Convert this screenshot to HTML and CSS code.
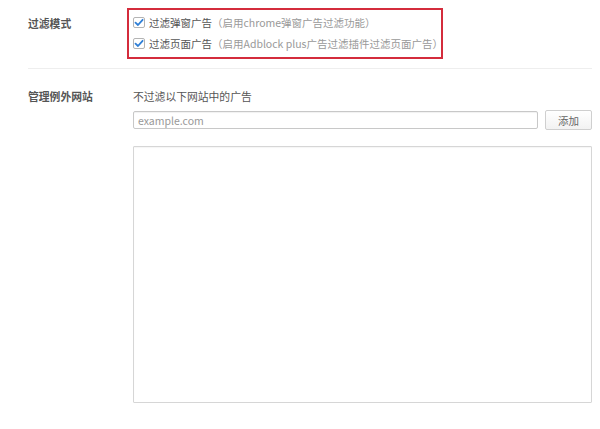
FILE: index.html
```html
<!DOCTYPE html>
<html lang="zh-CN">
<head>
<meta charset="utf-8">
<title>过滤设置</title>
<link rel="stylesheet" href="styles.css">
</head>
<body>
<div class="page">
  <section class="sec sec-mode">
    <div class="label label-mode">过滤模式</div>
    <div class="options">
      <label class="opt">
        <span class="cb"><svg width="10" height="9" viewBox="0 0 10 9"><path d="M1.5 4.6 L4 7 L8.6 1.8" fill="none" stroke="#2f7fd6" stroke-width="1.8" stroke-linecap="round" stroke-linejoin="round"/></svg></span>
        <span class="opt-main">过滤弹窗广告</span><span class="opt-note">（启用chrome弹窗广告过滤功能）</span>
      </label>
      <label class="opt">
        <span class="cb"><svg width="10" height="9" viewBox="0 0 10 9"><path d="M1.5 4.6 L4 7 L8.6 1.8" fill="none" stroke="#2f7fd6" stroke-width="1.8" stroke-linecap="round" stroke-linejoin="round"/></svg></span>
        <span class="opt-main">过滤页面广告</span><span class="opt-note">（启用Adblock plus广告过滤插件过滤页面广告）</span>
      </label>
    </div>
  </section>
  <div class="sep"></div>
  <section class="sec sec-except">
    <div class="label">管理例外网站</div>
    <div class="except-body">
      <div class="hint">不过滤以下网站中的广告</div>
      <div class="add-row">
        <input class="site-input" type="text" placeholder="example.com">
        <button class="add-btn" type="button">添加</button>
      </div>
      <textarea class="site-list"></textarea>
    </div>
  </section>
</div>
</body>
</html>
```

FILE: styles.css
```css
html, body {
  margin: 0;
  padding: 0;
  background: #fff;
}
body {
  font-family: "Noto Sans CJK SC", "Noto Sans", sans-serif;
  font-size: 10.5px;
  color: #555;
}
.page {
  padding: 0 8px 0 28px;
}
.sec {
  display: grid;
}
.sec-mode {
  grid-template-columns: 99px auto;
  padding-top: 8px;
  justify-content: start;
}
.label {
  font-size: 10.8px;
  font-weight: bold;
  color: #555;
  line-height: 18px;
}
.label-mode {
  margin-top: 6px;
}
.options {
  border: 2px solid #d42c3c;
  padding: 2px 4px 3px 4px;
  width: 304px;
}
.opt {
  display: flex;
  align-items: center;
  height: 21px;
  white-space: nowrap;
}
.cb {
  box-sizing: border-box;
  width: 12px;
  height: 11px;
  border: 1px solid #b4b4b4;
  border-radius: 2px;
  background: #fff;
  display: flex;
  align-items: center;
  justify-content: center;
  margin-right: 4px;
  flex: none;
}
.cb svg {
  display: block;
}
.opt-main {
  color: #555;
}
.opt-note {
  color: #999;
}
.opt-note-w {
  letter-spacing: 0.2px;
}
.sep {
  height: 1px;
  background: #eeeeee;
  margin-top: 9px;
}
.sec-except {
  grid-template-columns: 105px 1fr;
  padding-top: 18px;
}
.hint {
  line-height: 18px;
  color: #555;
  font-size: 10.8px;
}
.add-row {
  display: flex;
  align-items: center;
  gap: 7px;
  margin-top: 5px;
  height: 20px;
}
.site-input {
  flex: 1;
  box-sizing: border-box;
  height: 18px;
  border: 1px solid #c8c8c8;
  border-radius: 2px;
  padding: 0 4px;
  font-family: "Noto Sans CJK SC", "Noto Sans", sans-serif;
  font-size: 10.5px;
  color: #555;
  outline: none;
  box-shadow: inset 0 1px 1px rgba(0,0,0,0.06);
}
.site-input::placeholder {
  color: #999;
}
.add-btn {
  box-sizing: border-box;
  width: 47px;
  height: 20px;
  border: 1px solid #cfcfcf;
  border-radius: 2px;
  background: linear-gradient(#ffffff, #f2f2f2);
  font-family: "Noto Sans CJK SC", "Noto Sans", sans-serif;
  font-size: 10.5px;
  color: #666;
  padding: 0;
}
.site-list {
  display: block;
  box-sizing: border-box;
  width: 100%;
  height: 257px;
  margin-top: 16px;
  border: 1px solid #d6d6d6;
  border-radius: 1px;
  resize: none;
  outline: none;
  box-shadow: inset 0 1px 1px rgba(0,0,0,0.04);
}
```
